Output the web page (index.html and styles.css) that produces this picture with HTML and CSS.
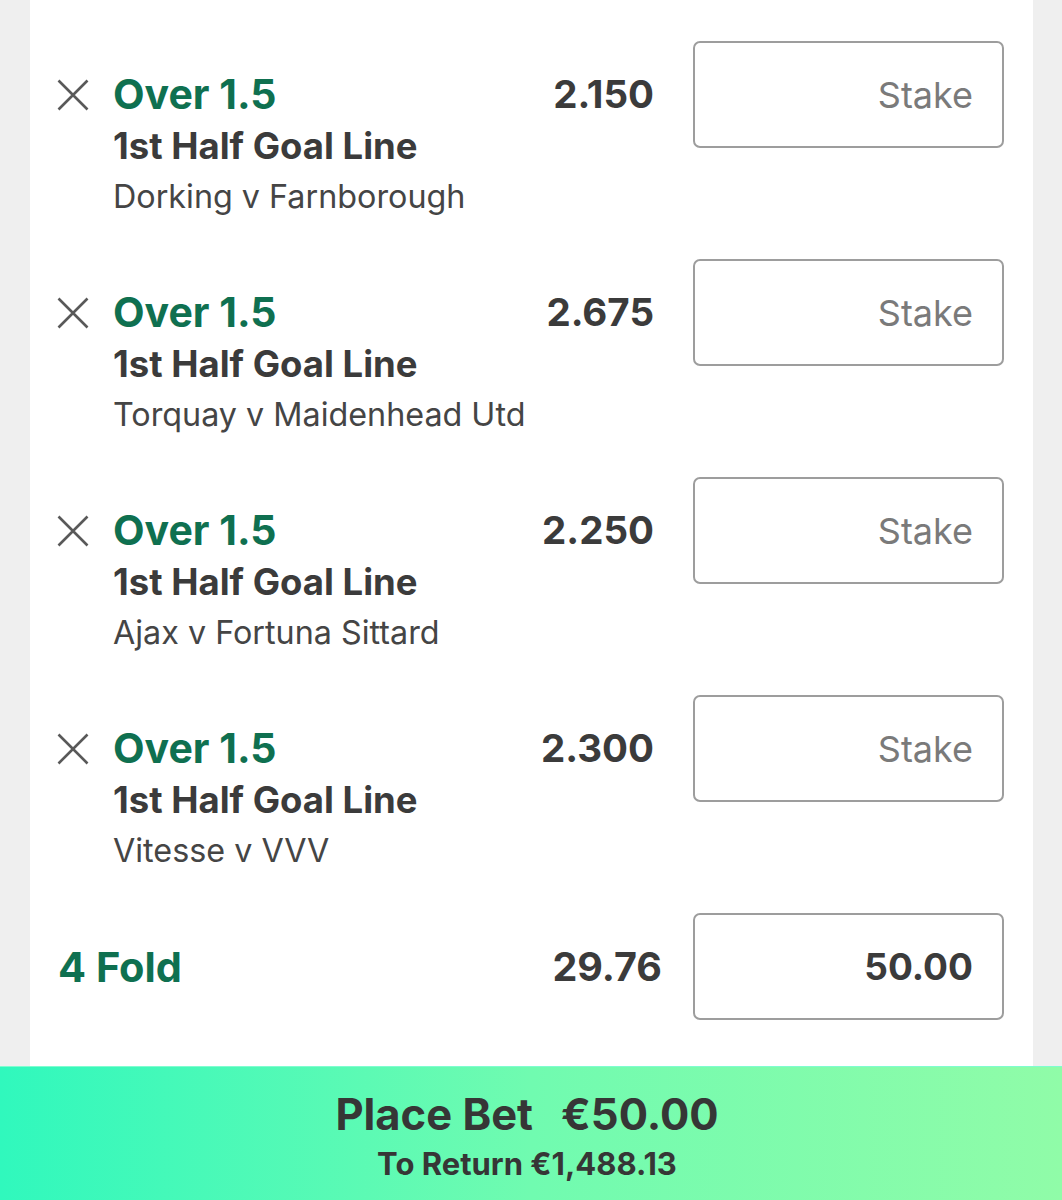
FILE: index.html
```html
<!DOCTYPE html>
<html>
<head>
<meta charset="utf-8">
<link rel="stylesheet" href="styles.css">
</head>
<body>
<div class="card">
  <div class="bet">
    <svg class="remove" viewBox="0 0 32 32"><path d="M1.5 1.5 L30.5 30.5 M30.5 1.5 L1.5 30.5"/></svg>
    <div class="info">
      <div class="sel">Over 1.5</div>
      <div class="market">1st Half Goal Line</div>
      <div class="match">Dorking v Farnborough</div>
    </div>
    <div class="odds">2.150</div>
    <div class="stake placeholder">Stake</div>
  </div>
  <div class="bet">
    <svg class="remove" viewBox="0 0 32 32"><path d="M1.5 1.5 L30.5 30.5 M30.5 1.5 L1.5 30.5"/></svg>
    <div class="info">
      <div class="sel">Over 1.5</div>
      <div class="market">1st Half Goal Line</div>
      <div class="match">Torquay v Maidenhead Utd</div>
    </div>
    <div class="odds">2.675</div>
    <div class="stake placeholder">Stake</div>
  </div>
  <div class="bet">
    <svg class="remove" viewBox="0 0 32 32"><path d="M1.5 1.5 L30.5 30.5 M30.5 1.5 L1.5 30.5"/></svg>
    <div class="info">
      <div class="sel">Over 1.5</div>
      <div class="market">1st Half Goal Line</div>
      <div class="match">Ajax v Fortuna Sittard</div>
    </div>
    <div class="odds">2.250</div>
    <div class="stake placeholder">Stake</div>
  </div>
  <div class="bet">
    <svg class="remove" viewBox="0 0 32 32"><path d="M1.5 1.5 L30.5 30.5 M30.5 1.5 L1.5 30.5"/></svg>
    <div class="info">
      <div class="sel">Over 1.5</div>
      <div class="market">1st Half Goal Line</div>
      <div class="match">Vitesse v VVV</div>
    </div>
    <div class="odds">2.300</div>
    <div class="stake placeholder">Stake</div>
  </div>
  <div class="fold">
    <div class="fold-name">4 Fold</div>
    <div class="fold-odds">29.76</div>
    <div class="stake value">50.00</div>
  </div>
</div>
<div class="place">
  <div class="place-main"><span>Place Bet</span><span class="amount">€50.00</span></div>
  <div class="place-return">To Return €1,488.13</div>
</div>
</body>
</html>
```
FILE: styles.css
```css
html, body {
  margin: 0;
  padding: 0;
}
body {
  width: 1062px;
  height: 1200px;
  overflow: hidden;
  background: #efefef;
  font-family: Inter, "Liberation Sans", "Noto Sans", sans-serif;
  color: #3b3b3b;
}
.card {
  margin-left: 30px;
  width: 1003px;
  height: 1066px;
  box-sizing: border-box;
  padding-top: 41px;
  background: #ffffff;
}
.bet {
  display: flex;
  align-items: flex-start;
  height: 218px;
  padding: 0 29px 0 27px;
}
.remove {
  width: 32px;
  height: 32px;
  margin-top: 38px;
  flex: none;
}
.remove path {
  stroke: #595959;
  stroke-width: 2.6;
  fill: none;
}
.info {
  flex: 1;
  margin-left: 24px;
  padding-top: 27px;
}
.sel {
  font-size: 41px;
  line-height: 53px;
  font-weight: 700;
  color: #0f7050;
}
.market {
  font-size: 36.5px;
  line-height: 50px;
  font-weight: 700;
  color: #3b3b3b;
}
.match {
  font-size: 32.3px;
  line-height: 51px;
  font-weight: 400;
  color: #454545;
}
.odds {
  padding-top: 27px;
  font-size: 38.5px;
  line-height: 53px;
  font-weight: 700;
  margin-right: 39px;
}
.stake {
  width: 311px;
  height: 107px;
  box-sizing: border-box;
  border: 2px solid #9d9d9d;
  border-radius: 7px;
  display: flex;
  align-items: center;
  justify-content: flex-end;
  padding-right: 29px;
  flex: none;
}
.placeholder {
  font-size: 36px;
  font-weight: 400;
  color: #7a7a7a;
}
.value {
  font-size: 37px;
  font-weight: 700;
  color: #3b3b3b;
}
.fold {
  display: flex;
  align-items: center;
  padding: 0 29px 0 28px;
}
.fold-name {
  flex: 1;
  font-size: 41.5px;
  font-weight: 700;
  color: #0f7050;
}
.fold-odds {
  font-size: 39.5px;
  font-weight: 700;
  margin-right: 31px;
}
.place {
  height: 134px;
  box-sizing: border-box;
  padding-top: 21px;
  padding-right: 8px;
  background: linear-gradient(90deg, #30f8bd 0%, #70fbb0 50%, #90fca8 100%);
  border-top: 1px solid #7ffdd0;
  display: flex;
  flex-direction: column;
  align-items: center;
  color: #363636;
}
.place-main {
  font-size: 43.5px;
  line-height: 52px;
  font-weight: 700;
}
.amount {
  margin-left: 28px;
}
.place-return {
  margin-top: 6px;
  font-size: 31px;
  line-height: 36px;
  font-weight: 700;
}
```
